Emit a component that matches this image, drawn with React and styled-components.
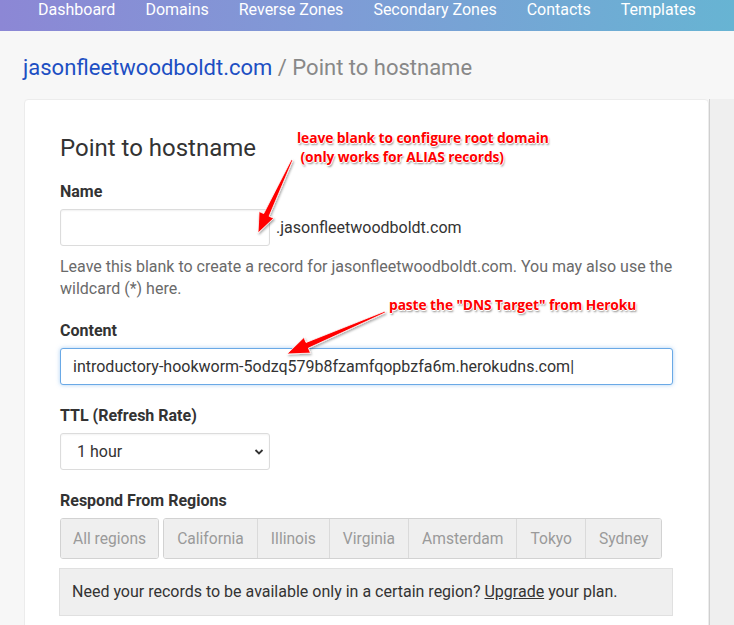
import styled, { createGlobalStyle } from "styled-components";

const GlobalStyle = createGlobalStyle`
  html, body {
    margin: 0;
    padding: 0;
    overflow: hidden;
    background: #f7f7f7;
    font-family: Roboto, "Liberation Sans", sans-serif;
    color: #333;
  }
  * {
    box-sizing: border-box;
  }
`;

const Page = styled.div`
  position: relative;
  width: 734px;
  height: 625px;
  overflow: hidden;
`;

const NavBar = styled.nav`
  height: 31px;
  display: flex;
  gap: 30px;
  padding-left: 38px;
  background: linear-gradient(90deg, #8c87d5 0%, #7f9bd6 45%, #67b4d3 100%);
`;

const NavItem = styled.a`
  color: #fff;
  font-size: 16px;
  line-height: 20px;
  white-space: nowrap;
  text-decoration: none;
`;

const Main = styled.main`
  padding: 22px 0 0 23px;
`;

const Breadcrumb = styled.h1`
  margin: 0 0 16px;
  font-size: 22px;
  font-weight: 400;
  line-height: 30px;
  color: #888;
  white-space: nowrap;
`;

const CrumbLink = styled.a`
  color: #1d4fc3;
  text-decoration: none;
`;

const Row = styled.div`
  display: flex;
  align-items: flex-start;
  padding-left: 1px;
`;

const Card = styled.section`
  flex: 0 0 684px;
  background: #fff;
  border: 1px solid #ececec;
  border-radius: 4px 4px 0 0;
  padding: 34px 35px 40px 35px;
`;

const Sidebar = styled.aside`
  flex: 0 0 300px;
  min-height: 560px;
  background: #efefef;
  border-left: 1px solid #cfcfcf;
  padding: 28px 0 0 24px;
  font-size: 14px;
  line-height: 22px;
  color: #555;
`;

const SideLine = styled.div`
  white-space: nowrap;
  margin-bottom: ${(p) => p.gap || 6}px;
  color: ${(p) => (p.link ? "#4b7fd6" : "#444")};
`;

const Heading = styled.h2`
  margin: 0 0 19px;
  font-size: 24px;
  font-weight: 400;
  line-height: 29px;
  color: #333;
`;

const Group = styled.div`
  margin-bottom: 21px;
`;

const Label = styled.label`
  display: block;
  font-size: 16px;
  font-weight: 700;
  line-height: 20px;
  color: #333;
  margin-bottom: 7px;
`;

const InlineRow = styled.div`
  display: flex;
  align-items: center;
  gap: 6px;
`;

const Input = styled.input`
  width: ${(p) => p.w || "100%"};
  height: 37px;
  padding: 0 12px;
  font-family: Roboto, "Liberation Sans", sans-serif;
  font-size: 16px;
  color: #333;
  background: #fff;
  border: 1px solid ${(p) => (p.focused ? "#6aa9e6" : "#dcdcdc")};
  border-radius: 3px;
  outline: none;
  box-shadow: ${(p) =>
    p.focused
      ? "0 0 4px rgba(102, 170, 233, 0.55)"
      : "inset 0 1px 2px rgba(0, 0, 0, 0.06)"};
`;

const Suffix = styled.span`
  font-size: 16px;
  color: #333;
  white-space: nowrap;
`;

const Help = styled.p`
  margin: 10px 0 0;
  font-size: 16px;
  line-height: 22px;
  color: #6a6a6a;
`;

const SelectBox = styled.div`
  position: relative;
  width: 210px;
  height: 37px;
  display: flex;
  align-items: center;
  padding-left: 16px;
  font-size: 16px;
  color: #333;
  background: #fff;
  border: 1px solid #dcdcdc;
  border-radius: 3px;
  box-shadow: inset 0 1px 2px rgba(0, 0, 0, 0.05);
`;

const Chevron = styled.svg`
  position: absolute;
  right: 5px;
  top: 14px;
`;

const RegionRow = styled.div`
  display: flex;
  gap: 4px;
`;

const ButtonGroup = styled.div`
  display: flex;
  border: 1px solid #d2d2d2;
  border-radius: 3px;
  overflow: hidden;
`;

const RegionButton = styled.span`
  height: 39px;
  display: flex;
  align-items: center;
  padding: 0 ${(p) => p.pad || 13}px;
  font-size: 15.6px;
  color: #9a9a9a;
  background: #efefef;
  border-left: ${(p) => (p.first ? "none" : "1px solid #dadada")};
  white-space: nowrap;
`;

const Notice = styled.div`
  margin-top: 9px;
  width: 614px;
  margin-left: -1px;
  padding: 13px 12px 13px 12px;
  background: #efefef;
  border: 1px solid #e0e0e0;
  font-size: 16px;
  line-height: 20px;
  color: #333;
`;

const Upgrade = styled.a`
  color: #333;
  text-decoration: underline;
`;

const Note = styled.div`
  position: absolute;
  left: ${(p) => p.x}px;
  top: ${(p) => p.y}px;
  font-family: "Open Sans", "DejaVu Sans", sans-serif;
  font-weight: 700;
  font-size: 13.8px;
  line-height: 19px;
  color: #f00;
  white-space: pre;
  letter-spacing: -0.1px;
  text-shadow: -1px 0 #fff, 1px 0 #fff, 0 -1px #fff, 0 1px #fff,
    1px 2px 2px rgba(0, 0, 0, 0.45);
  pointer-events: none;
`;

const ArrowLayer = styled.svg`
  position: absolute;
  left: 0;
  top: 0;
  pointer-events: none;
`;

const regions = [
  ["California", 13],
  ["Illinois", 13],
  ["Virginia", 13],
  ["Amsterdam", 13],
  ["Tokyo", 13],
  ["Sydney", 13],
];

const navItems = [
  "Dashboard",
  "Domains",
  "Reverse Zones",
  "Secondary Zones",
  "Contacts",
  "Templates",
];

export default function App() {
  return (
    <Page>
      <GlobalStyle />
      <NavBar>
        {navItems.map((item) => (
          <NavItem key={item}>{item}</NavItem>
        ))}
      </NavBar>

      <Main>
        <Breadcrumb>
          <CrumbLink>jasonfleetwoodboldt.com</CrumbLink> / Point to hostname
        </Breadcrumb>

        <Row>
          <Card>
            <Heading>Point to hostname</Heading>

            <Group>
              <Label>Name</Label>
              <InlineRow>
                <Input w="210px" />
                <Suffix>.jasonfleetwoodboldt.com</Suffix>
              </InlineRow>
              <Help>
                Leave this blank to create a record for jasonfleetwoodboldt.com.
                You may also use the wildcard (*) here.
              </Help>
            </Group>

            <Group>
              <Label>Content</Label>
              <Input
                focused
                readOnly
                value="introductory-hookworm-5odzq579b8fzamfqopbzfa6m.herokudns.com|"
              />
            </Group>

            <Group>
              <Label>TTL (Refresh Rate)</Label>
              <SelectBox>
                1 hour
                <Chevron width="10" height="8" viewBox="0 0 10 8">
                  <path d="M1.5 2 L5 5.5 L8.5 2" fill="none" stroke="#333" strokeWidth="1.8" />
                </Chevron>
              </SelectBox>
            </Group>

            <Label>Respond From Regions</Label>
            <RegionRow>
              <ButtonGroup>
                <RegionButton first pad={12}>All regions</RegionButton>
              </ButtonGroup>
              <ButtonGroup>
                {regions.map(([name, pad], i) => (
                  <RegionButton key={name} first={i === 0} pad={pad}>
                    {name}
                  </RegionButton>
                ))}
              </ButtonGroup>
            </RegionRow>
            <Notice>
              Need your records to be available only in a certain region?{" "}
              <Upgrade>Upgrade</Upgrade> your plan.
            </Notice>
          </Card>

          <Sidebar>
            <SideLine gap={9}>About ALIAS records</SideLine>
            <SideLine gap={0}>An ALIAS record points your</SideLine>
            <SideLine gap={6}>domain at another hostname.</SideLine>
            <SideLine gap={0}>Your root domain can use</SideLine>
            <SideLine gap={0}>one for services such as</SideLine>
            <SideLine gap={10}>Heroku.</SideLine>
            <SideLine link gap={8}>Learn more</SideLine>
            <SideLine link gap={0}>Record types</SideLine>
            <SideLine link>Help</SideLine>
          </Sidebar>
        </Row>
      </Main>

      <Note x={297} y={128}>
        {"leave blank to configure root domain\n (only works for ALIAS records)"}
      </Note>
      <Note x={389} y={295}>{'paste the "DNS Target" from Heroku'}</Note>

      <ArrowLayer width="734" height="625" viewBox="0 0 734 625">
        <defs>
          <filter id="arrowShadow" x="-20%" y="-20%" width="140%" height="140%">
            <feDropShadow dx="1" dy="1.5" stdDeviation="1" floodColor="#000" floodOpacity="0.35" />
          </filter>
        </defs>
        <polygon
          points="292.7,160.3 269.1,216.2 273.7,218.3 258,233 259.1,211.5 263.7,213.6 291.3,159.7"
          fill="#f00"
          stroke="#fff"
          strokeWidth="0.8"
          strokeLinejoin="round"
          filter="url(#arrowShadow)"
        />
        <polygon
          points="385.3,312.7 308.4,348.1 310.5,353.1 287,354 303.9,337.5 306,342.5 384.7,311.3"
          fill="#f00"
          stroke="#fff"
          strokeWidth="0.8"
          strokeLinejoin="round"
          filter="url(#arrowShadow)"
        />
      </ArrowLayer>
    </Page>
  );
}
